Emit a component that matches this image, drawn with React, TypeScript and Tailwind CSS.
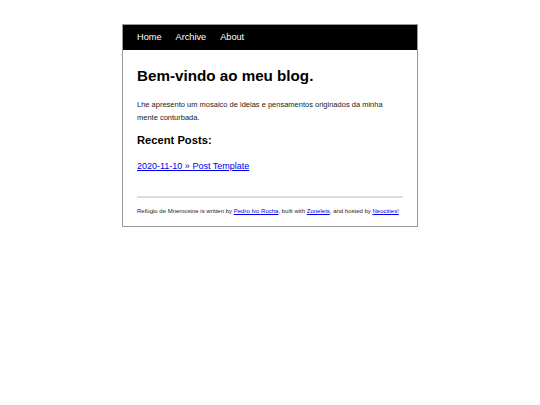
const navLinks = ['Home', 'Archive', 'About'];

export default function App() {
  return (
    <div className="min-h-[405px] bg-white pt-6 font-['Liberation_Sans',Arial,sans-serif] text-[#111]">
      <div className="mx-auto w-[296px] border border-[#999] bg-white">
        <nav className="flex h-[25px] items-center gap-[14px] bg-black pl-[14px]">
          {navLinks.map((l) => (
            <a key={l} href="#" className="text-[9.2px] text-white">
              {l}
            </a>
          ))}
        </nav>

        <main className="px-[14px] pb-[10px]">
          <h1 className="mt-[17px] text-[15.2px] leading-[18px] font-bold text-black">Bem-vindo ao meu blog.</h1>
          <p className="mt-[13px] text-[7.5px] leading-[13px] text-[#222]">
            Lhe apresento um mosaico de ideias e pensamentos originados da minha mente conturbada.
          </p>

          <h2 className="mt-[9px] text-[11.2px] leading-[14px] font-bold text-black">Recent Posts:</h2>
          <ul className="mt-[13px]">
            <li className="text-[9px] leading-[12px]">
              <a href="#" className="text-[#0000ee] underline">
                2020-11-10 » Post Template
              </a>
            </li>
          </ul>

          <hr className="mt-[24px] border-t-2 border-[#ddd]" />
          <footer className="mt-[8px] text-[6px] leading-[10px] text-[#222]">
            Refúgio de Mnemosine is written by{' '}
            <a href="#" className="text-[#0000ee] underline">
              Pedro Ivo Rocha
            </a>
            , built with{' '}
            <a href="#" className="text-[#0000ee] underline">
              Zonelets
            </a>
            , and hosted by{' '}
            <a href="#" className="text-[#0000ee] underline">
              Neocities!
            </a>
          </footer>
        </main>
      </div>
    </div>
  );
}
